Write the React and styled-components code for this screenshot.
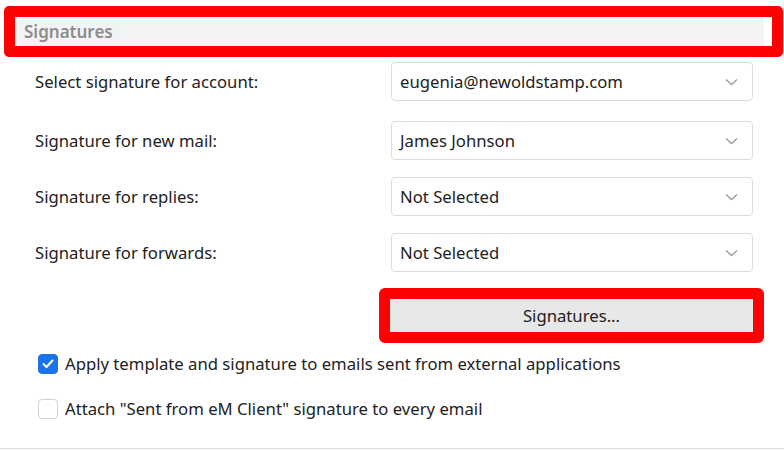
import React from 'react';
import styled, { createGlobalStyle } from 'styled-components';

const Global = createGlobalStyle`
  html, body {
    margin: 0;
    padding: 0;
    background: #fff;
  }
  body {
    font-family: "Noto Sans", "Open Sans", sans-serif;
    color: #222;
  }
`;

const Page = styled.div`
  width: 784px;
  height: 450px;
  position: relative;
  overflow: hidden;
  padding-top: 6px;
  box-sizing: border-box;
`;

const Highlight = styled.div`
  border: 11px solid #ff0000;
  border-radius: 5px;
  box-sizing: border-box;
`;

const HeaderFrame = styled(Highlight)`
  margin-left: 4px;
  width: 779px;
  height: 51px;
  padding-right: 8px;
  background: #fff;
`;

const HeaderBar = styled.div`
  height: 100%;
  background: #f2f3f5;
  display: flex;
  align-items: center;
  padding-left: 9px;
  font-size: 17px;
  font-weight: 600;
  color: #8c8c8c;
`;

const Rows = styled.div`
  display: flex;
  flex-direction: column;
  padding: 5px 0 0 35px;
`;

const Row = styled.div`
  display: grid;
  grid-template-columns: 356px 362px;
  align-items: center;
  height: 39px;
  margin-top: ${p => p.$gap || 0}px;
`;

const Label = styled.span`
  font-size: 16.7px;
  color: #222;
`;

const Select = styled.div`
  height: 39px;
  box-sizing: border-box;
  border: 1px solid #dcdcdc;
  border-radius: 4px;
  display: flex;
  align-items: center;
  justify-content: space-between;
  padding: 0 14px 0 8px;
  font-size: 16.7px;
  color: #222;
`;

const Chevron = () => (
  <svg width="13" height="8" viewBox="0 0 13 8">
    <path d="M1 1.5 L6.5 6.5 L12 1.5" fill="none" stroke="#999" strokeWidth="1.3" />
  </svg>
);

const ButtonFrame = styled(Highlight)`
  margin: 16px 0 0 379px;
  width: 385px;
  height: 55px;
  border-radius: 6px;
`;

const Button = styled.div`
  height: 100%;
  background: #e8e8e8;
  display: flex;
  align-items: center;
  justify-content: center;
  font-size: 16.7px;
  color: #222;
`;

const Checks = styled.div`
  display: flex;
  flex-direction: column;
  gap: 22px;
  padding: 9px 0 0 38px;
`;

const CheckRow = styled.label`
  display: flex;
  align-items: center;
  gap: 7px;
  height: 23px;
  font-size: 16.7px;
  color: #222;
`;

const Box = styled.span`
  width: 20px;
  height: 20px;
  box-sizing: border-box;
  border-radius: 4px;
  display: flex;
  align-items: center;
  justify-content: center;
  background: ${p => (p.$on ? '#1a73e8' : '#fff')};
  border: 1px solid ${p => (p.$on ? '#1a73e8' : '#d0d0d0')};
`;

const Divider = styled.div`
  position: absolute;
  left: 0;
  right: 0;
  top: 448px;
  height: 1px;
  background: #dedede;
`;

const selects = [
  { label: 'Select signature for account:', value: 'eugenia@newoldstamp.com', gap: 0 },
  { label: 'Signature for new mail:', value: 'James Johnson', gap: 20 },
  { label: 'Signature for replies:', value: 'Not Selected', gap: 17 },
  { label: 'Signature for forwards:', value: 'Not Selected', gap: 17 },
];

export default function App() {
  return (
    <Page>
      <Global />
      <HeaderFrame>
        <HeaderBar>Signatures</HeaderBar>
      </HeaderFrame>
      <Rows>
        {selects.map(s => (
          <Row key={s.label} $gap={s.gap}>
            <Label>{s.label}</Label>
            <Select>
              <span>{s.value}</span>
              <Chevron />
            </Select>
          </Row>
        ))}
      </Rows>
      <ButtonFrame>
        <Button>Signatures...</Button>
      </ButtonFrame>
      <Checks>
        <CheckRow>
          <Box $on>
            <svg width="12" height="10" viewBox="0 0 12 10">
              <path d="M1.5 5 L4.5 8 L10.5 1.5" fill="none" stroke="#fff" strokeWidth="2" strokeLinecap="round" strokeLinejoin="round" />
            </svg>
          </Box>
          Apply template and signature to emails sent from external applications
        </CheckRow>
        <CheckRow>
          <Box />
          Attach "Sent from eM Client" signature to every email
        </CheckRow>
      </Checks>
      <Divider />
    </Page>
  );
}
